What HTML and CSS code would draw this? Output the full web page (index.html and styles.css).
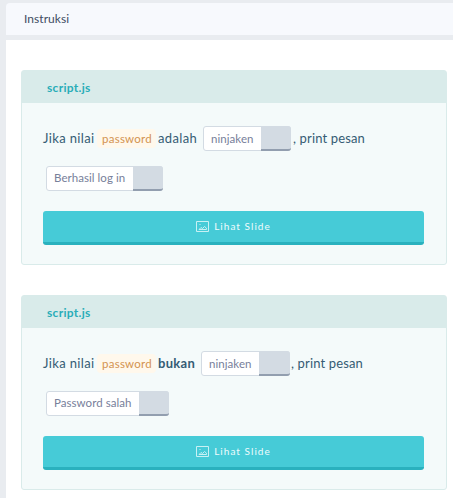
FILE: index.html
```html
<!DOCTYPE html>
<html lang="id">
<head>
<meta charset="utf-8">
<title>Instruksi</title>
<link rel="stylesheet" href="styles.css">
</head>
<body>
<header class="topbar">Instruksi</header>
<main class="content">
  <section class="card">
    <h2 class="card-title">script.js</h2>
    <div class="card-body">
      <div class="line"><span class="w-intro">Jika nilai</span><code class="keyword">password</code><span class="w-adalah">adalah</span><span class="token token-a"><span class="token-label">ninjaken</span><span class="token-slot"></span></span><span class="tail">, print pesan</span></div>
      <div class="line"><span class="token token-b"><span class="token-label">Berhasil log in</span><span class="token-slot"></span></span></div>
      <button class="slide-button"><svg class="icon" viewBox="0 0 13 11"><path d="M.5.5h12v10H.5zM3 8.5h7.5V7.2L8.5 5.5 6.5 7.5 5 6.5 3 8.5M3.5 3.5h1" /></svg><span>Lihat Slide</span></button>
    </div>
  </section>
  <section class="card">
    <h2 class="card-title">script.js</h2>
    <div class="card-body">
      <div class="line"><span class="w-intro">Jika nilai</span><code class="keyword">password</code><b class="w-bukan">bukan</b><span class="token token-c"><span class="token-label">ninjaken</span><span class="token-slot"></span></span><span class="tail tail-near">, print pesan</span></div>
      <div class="line"><span class="token token-d"><span class="token-label">Password salah</span><span class="token-slot"></span></span></div>
      <button class="slide-button"><svg class="icon" viewBox="0 0 13 11"><path d="M.5.5h12v10H.5zM3 8.5h7.5V7.2L8.5 5.5 6.5 7.5 5 6.5 3 8.5M3.5 3.5h1" /></svg><span>Lihat Slide</span></button>
    </div>
  </section>
</main>
</body>
</html>
```
FILE: styles.css
```css
* { box-sizing: border-box; }
body {
  margin: 0;
  height: 498px;
  overflow: hidden;
  padding: 3px 0 0 6px;
  background: #e9ecf0;
  font-family: Lato, sans-serif;
  color: #355c74;
}
.topbar {
  height: 32px;
  padding-left: 18px;
  border-radius: 4px 0 0 0;
  background: #f7f9fd;
  color: #3f4d63;
  font-size: 12px;
  line-height: 32px;
  letter-spacing: 0.05px;
}
.content {
  display: flex;
  flex-direction: column;
  gap: 30px;
  height: 458px;
  margin-top: 5px;
  padding: 30px 6px 0 15px;
  background: #fff;
}
.card {
  flex: none;
  height: 195px;
  border: 1px solid #d9ebea;
  border-radius: 3px;
  background: #f4fafa;
}
.card-title {
  height: 32px;
  margin: 0;
  padding-left: 25px;
  background: #d9ebea;
  color: #29adb8;
  font-size: 12px;
  line-height: 34px;
  letter-spacing: 0.3px;
}
.card-body { padding: 15px 22px 0 21px; }
.line {
  display: flex;
  align-items: center;
  height: 40px;
  font-size: 13px;
  letter-spacing: 0.25px;
  white-space: nowrap;
}
.w-intro { width: 54px; letter-spacing: 0.35px; }
.keyword {
  width: 59px;
  height: 19px;
  padding-left: 5px;
  border-radius: 4px;
  background: #fff8ec;
  color: #d39350;
  font: 11.5px/20px Lato, sans-serif;
}
.w-adalah { width: 45px; margin-left: 2px; letter-spacing: 0.35px; }
.w-bukan { width: 43px; margin-left: 2px; letter-spacing: 0.3px; }
.token {
  display: flex;
  height: 25px;
  border: 1px solid #d3dbe3;
  border-radius: 3px;
  background: #fff;
  color: #77809a;
  font: 11.5px/24px Lato, sans-serif;
  letter-spacing: 0.05px;
}
.token-a { width: 88px; }
.token-b { width: 117px; margin-left: 3px; line-height: 22px; }
.token-c { width: 89px; }
.token-d { width: 123px; margin-left: 3px; line-height: 22px; }
.token-label { flex: 1; min-width: 0; padding-left: 7px; }
.token-slot {
  flex: none;
  width: 31px;
  height: 25px;
  margin: -1px -1px -1px 0;
  border-bottom: 2px solid #929eaf;
  border-radius: 0 3px 3px 0;
  background: #d3dbe3;
}
.token-a .token-slot,
.token-b .token-slot,
.token-d .token-slot { width: 30px; }
.tail { margin-left: 2px; letter-spacing: 0.15px; }
.tail-near { margin-left: 1px; }
.slide-button {
  display: flex;
  align-items: center;
  justify-content: center;
  gap: 5px;
  width: 381px;
  height: 34px;
  margin-top: 13px;
  padding: 0;
  border: 0;
  border-bottom: 3px solid #2ab1be;
  border-radius: 3px;
  background: #46cbd7;
  color: #effcfd;
  font: 10px/30px Lato, sans-serif;
  letter-spacing: 1.05px;
}
.slide-button span { margin-top: -1px; }
.icon {
  width: 13px;
  height: 11px;
  fill: none;
  stroke: #c8f1f4;
  stroke-width: 1;
}
```
